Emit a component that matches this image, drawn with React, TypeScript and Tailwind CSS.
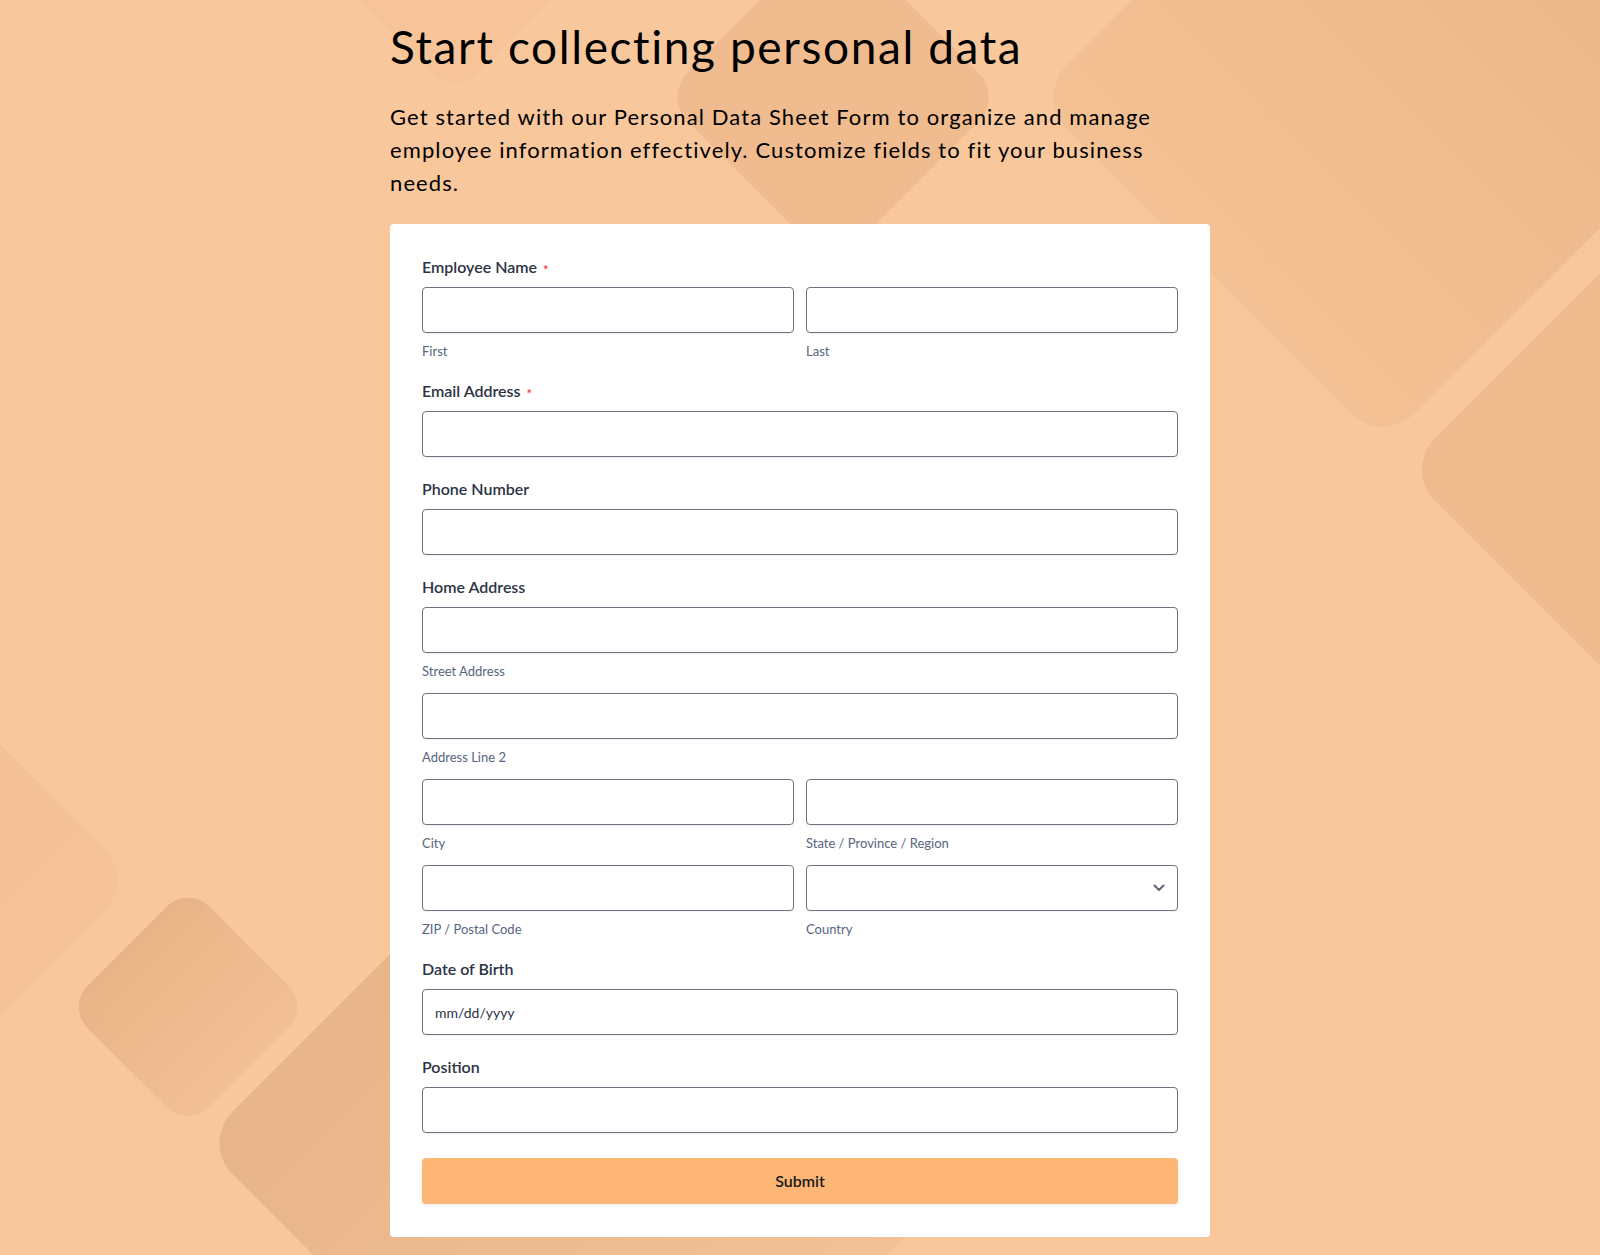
import React from "react";

const Background = () => (
  <svg
    className="absolute inset-0 h-full w-full"
    viewBox="0 0 1600 1255"
    preserveAspectRatio="xMidYMin slice"
  >
    <defs>
      <linearGradient id="gTop" x1="0" y1="0" x2="0" y2="1">
        <stop offset="0" stopColor="#ebb78a" />
        <stop offset="1" stopColor="#f4c195" />
      </linearGradient>
      <linearGradient id="gSmall" x1="0" y1="0" x2="1" y2="0">
        <stop offset="0" stopColor="#e8b487" />
        <stop offset="1" stopColor="#f3c095" />
      </linearGradient>
      <linearGradient id="gBig" x1="0" y1="0" x2="1" y2="0">
        <stop offset="0" stopColor="#e8b589" />
        <stop offset="1" stopColor="#f3c197" />
      </linearGradient>
      <linearGradient id="gLeft" x1="0" y1="0" x2="1" y2="0">
        <stop offset="0" stopColor="#f1bd91" />
        <stop offset="1" stopColor="#f6c398" />
      </linearGradient>
    </defs>
    <rect width="1600" height="1255" fill="#f9c79c" />
    {/* faint top-left */}
    <rect x="345" y="-170" width="220" height="220" rx="30" fill="#f7c499" transform="rotate(45 455 -60)" />
    {/* top center */}
    <rect x="713" y="-23" width="240" height="240" rx="34" fill="#efbb8f" transform="rotate(45 833 97)" />
    {/* top right big */}
    <rect x="1137" y="-149" width="492" height="492" rx="44" fill="url(#gTop)" transform="rotate(45 1383 97)" />
    {/* right middle */}
    <rect x="1532" y="161" width="617" height="617" rx="44" fill="#efbb8e" transform="rotate(45 1840 469)" />
    {/* left */}
    <rect x="-318" y="692" width="376" height="376" rx="44" fill="url(#gLeft)" transform="rotate(45 -130 880)" />
    {/* small */}
    <rect x="102" y="921" width="172" height="172" rx="30" fill="url(#gSmall)" transform="rotate(45 188 1007)" />
    {/* big bottom */}
    <rect x="318" y="861" width="564" height="564" rx="44" fill="url(#gBig)" transform="rotate(45 600 1143)" />
  </svg>
);

const Label = ({ text, required }: { text: string; required?: boolean }) => (
  <div className="mb-[10px] flex h-5 items-center text-[16px] font-semibold leading-5 text-[#2c3345]">
    {text}
    {required && (
      <span className="ml-[6px] translate-y-[3px] text-[13px] leading-none text-[#f23a3c]">*</span>
    )}
  </div>
);

const inputCls =
  "block h-[46px] w-full rounded-[4px] border border-[#6b7280] bg-white px-3 text-[14px] text-[#2c3345] shadow-[0_1px_2px_rgba(0,0,0,0.06)] outline-none";

const SubField = ({ sub, children }: { sub: string; children?: React.ReactNode }) => (
  <div className="flex-1">
    {children ?? <input className={inputCls} />}
    <div className="mt-[10px] h-4 text-[13px] leading-4 text-[#57647e]">{sub}</div>
  </div>
);

const Chevron = () => (
  <svg className="pointer-events-none absolute right-[13px] top-1/2 -translate-y-1/2" width="12" height="8" viewBox="0 0 12 8">
    <path d="M1.5 1.5 6 6l4.5-4.5" fill="none" stroke="#5e6574" strokeWidth="2" strokeLinecap="round" strokeLinejoin="round" />
  </svg>
);

export default function App() {
  return (
    <div className="relative min-h-screen overflow-hidden font-['Lato',sans-serif]">
      <Background />
      <div className="relative mx-auto w-[820px] pt-[19px] pb-[18px]">
        <h1 className="text-[46px] font-normal leading-[55px] tracking-[1.6px] text-black">
          Start collecting personal data
        </h1>
        <p className="mt-[26px] text-[22px] leading-[33px] tracking-[1.1px] text-black">
          Get started with our Personal Data Sheet Form to organize and manage
          employee information effectively. Customize fields to fit your business
          needs.
        </p>
        <form
          className="mt-[25px] rounded-[4px] bg-white px-8 pt-[33px] pb-[33px]"
          onSubmit={(e) => e.preventDefault()}
        >
          <div className="mb-[22px]">
            <Label text="Employee Name" required />
            <div className="flex gap-3">
              <SubField sub="First" />
              <SubField sub="Last" />
            </div>
          </div>

          <div className="mb-[22px]">
            <Label text="Email Address" required />
            <input className={inputCls} type="email" />
          </div>

          <div className="mb-[22px]">
            <Label text="Phone Number" />
            <input className={inputCls} />
          </div>

          <div className="mb-[22px] flex flex-col gap-[14px]">
            <div>
              <Label text="Home Address" />
              <SubField sub="Street Address" />
            </div>
            <SubField sub="Address Line 2" />
            <div className="flex gap-3">
              <SubField sub="City" />
              <SubField sub="State / Province / Region" />
            </div>
            <div className="flex gap-3">
              <SubField sub="ZIP / Postal Code" />
              <SubField sub="Country">
                <div className="relative">
                  <select className={inputCls + " appearance-none"} defaultValue="">
                    <option value=""></option>
                  </select>
                  <Chevron />
                </div>
              </SubField>
            </div>
          </div>

          <div className="mb-[22px]">
            <Label text="Date of Birth" />
            <input
              className={inputCls + " placeholder:text-[#2c3345]"}
              placeholder="mm/dd/yyyy"
            />
          </div>

          <div className="mb-[25px]">
            <Label text="Position" />
            <input className={inputCls} />
          </div>

          <button
            type="submit"
            className="block h-[46px] w-full rounded-[4px] bg-[#feb677] text-[16px] font-semibold text-[#1a1a1a] shadow-[0_2px_3px_rgba(0,0,0,0.06)]"
          >
            Submit
          </button>
        </form>
      </div>
    </div>
  );
}
